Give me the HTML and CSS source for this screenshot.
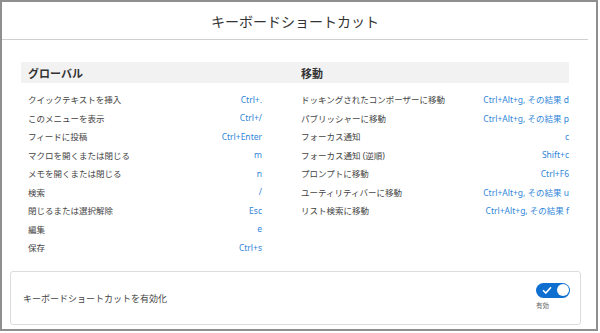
FILE: index.html
```html
<!DOCTYPE html>
<html lang="ja">
<head>
    <meta charset="UTF-8">
    <title>キーボードショートカット</title>
    <link rel="stylesheet" href="styles.css">
</head>
<body>
    <div class="dialog">
        <header class="dialog-header">
            <h1 class="dialog-title">キーボードショートカット</h1>
        </header>

        <div class="dialog-body">
            <section class="group group-left">
                <h2 class="group-title">グローバル</h2>
                <ul class="shortcut-list">
                    <li><span>クイックテキストを挿入</span><span class="keys">Ctrl+.</span></li>
                    <li><span>このメニューを表示</span><span class="keys">Ctrl+/</span></li>
                    <li><span>フィードに投稿</span><span class="keys">Ctrl+Enter</span></li>
                    <li><span>マクロを開くまたは閉じる</span><span class="keys">m</span></li>
                    <li><span>メモを開くまたは閉じる</span><span class="keys">n</span></li>
                    <li><span>検索</span><span class="keys">/</span></li>
                    <li><span>閉じるまたは選択解除</span><span class="keys">Esc</span></li>
                    <li><span>編集</span><span class="keys">e</span></li>
                    <li><span>保存</span><span class="keys">Ctrl+s</span></li>
                </ul>
            </section>
            <section class="group group-right">
                <h2 class="group-title">移動</h2>
                <ul class="shortcut-list">
                    <li><span>ドッキングされたコンポーザーに移動</span><span class="keys">Ctrl+Alt+g, その結果 d</span></li>
                    <li><span>パブリッシャーに移動</span><span class="keys">Ctrl+Alt+g, その結果 p</span></li>
                    <li><span>フォーカス通知</span><span class="keys">c</span></li>
                    <li><span>フォーカス通知 (逆順)</span><span class="keys">Shift+c</span></li>
                    <li><span>プロンプトに移動</span><span class="keys">Ctrl+F6</span></li>
                    <li><span>ユーティリティバーに移動</span><span class="keys">Ctrl+Alt+g, その結果 u</span></li>
                    <li><span>リスト検索に移動</span><span class="keys">Ctrl+Alt+g, その結果 f</span></li>
                </ul>
            </section>
        </div>

        <div class="setting-card">
            <span class="setting-label">キーボードショートカットを有効化</span>
            <div class="toggle-wrap">
                <span class="toggle">
                    <svg class="toggle-check" width="10" height="8" viewBox="0 0 10 8">
                        <path d="M1 4.2 L3.8 7 L9 1.2" fill="none" stroke="#fff" stroke-width="1.6"/>
                    </svg>
                    <span class="toggle-knob"></span>
                </span>
                <span class="toggle-text">有効</span>
            </div>
        </div>
    </div>
</body>
</html>
```

FILE: styles.css
```css
* {
    margin: 0;
    padding: 0;
    box-sizing: border-box;
}

body {
    font-family: "Noto Sans", "Noto Sans CJK JP", sans-serif;
    background: #fff;
    color: #444;
}

.dialog {
    width: 598px;
    height: 331px;
    border: 2px solid #8f8f8f;
    display: flex;
    flex-direction: column;
}

.dialog-header {
    height: 38px;
    margin-right: 8px;
    border-bottom: 1px solid #cfcfcf;
    display: flex;
    align-items: center;
    justify-content: center;
}

.dialog-title {
    font-size: 14px;
    font-weight: normal;
    color: #333;
}

.dialog-body {
    flex: 1;
    display: grid;
    grid-template-columns: 274px 274px;
    padding: 22px 0 0 19px;
}

.group-title {
    background: #f2f2f2;
    height: 21px;
    font-size: 11px;
    font-weight: bold;
    color: #333;
    display: flex;
    align-items: center;
    margin-bottom: 7px;
}

.group-left .group-title {
    padding-left: 7px;
}

.group-right .group-title {
    padding-left: 6px;
}

.shortcut-list {
    list-style: none;
}

.shortcut-list li {
    display: flex;
    justify-content: space-between;
    align-items: center;
    height: 18.5px;
    font-size: 8.5px;
    padding-left: 7px;
}

.group-left .shortcut-list li {
    padding-right: 33px;
}

.group-right .shortcut-list li {
    padding-left: 6px;
}

.keys {
    color: #2f86d8;
}

.setting-card {
    margin: 0 15px 4px 8px;
    height: 54px;
    border: 1px solid #dcdcdc;
    border-radius: 3px;
    display: flex;
    align-items: center;
    justify-content: space-between;
    padding: 0 10px 0 12px;
}

.setting-label {
    font-size: 9px;
    color: #444;
}

.toggle-wrap {
    display: flex;
    flex-direction: column;
    align-items: flex-start;
    gap: 2px;
    margin-bottom: 4px;
}

.toggle {
    width: 34px;
    height: 15px;
    border-radius: 8px;
    background: #0e6fd1;
    display: flex;
    align-items: center;
    justify-content: space-between;
    padding: 0 1.5px 0 6px;
}

.toggle-knob {
    width: 12px;
    height: 12px;
    border-radius: 50%;
    background: #fff;
}

.toggle-text {
    font-size: 6.5px;
    color: #666;
}
```
